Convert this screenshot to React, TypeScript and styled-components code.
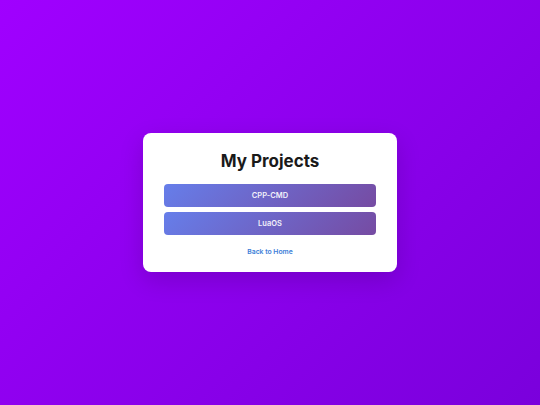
import React from 'react';
import styled, {createGlobalStyle} from 'styled-components';

const GlobalStyle = createGlobalStyle`
  html, body {
    margin: 0;
    padding: 0;
    height: 100%;
  }
  body {
    font-family: Inter, "Noto Sans", sans-serif;
  }
  #root {
    height: 100%;
  }
`;

const Page = styled.div`
  min-height: 100vh;
  display: flex;
  align-items: center;
  justify-content: center;
  background: linear-gradient(135deg, #a000ff 0%, #7a00dc 100%);
`;

const Card = styled.div`
  width: 254px;
  box-sizing: border-box;
  padding: 17px 21px 16px;
  background: #ffffff;
  border-radius: 8px;
  box-shadow: 0 8px 24px rgba(0, 0, 0, 0.15);
  display: flex;
  flex-direction: column;
  align-items: stretch;
`;

const Title = styled.h1`
  margin: 0 0 12px;
  font-size: 17px;
  line-height: 22px;
  font-weight: 700;
  color: #1a1a1a;
  text-align: center;
`;

const ProjectList = styled.div`
  display: flex;
  flex-direction: column;
  gap: 5px;
`;

const ProjectButton = styled.a`
  height: 23px;
  display: flex;
  align-items: center;
  justify-content: center;
  border-radius: 4px;
  background: linear-gradient(135deg, #667eea 0%, #764ba2 100%);
  color: #f2f0fa;
  font-size: 7.5px;
  font-weight: 600;
  text-decoration: none;
`;

const BackLink = styled.a`
  margin-top: 12px;
  align-self: center;
  color: #3b7dd8;
  font-size: 6.8px;
  font-weight: 600;
  text-decoration: none;
`;

const projects = ['CPP-CMD', 'LuaOS'];

const App: React.FC = () => {
    return (
        <>
            <GlobalStyle/>
            <Page>
                <Card>
                    <Title>My Projects</Title>
                    <ProjectList>
                        {projects.map(name => (
                            <ProjectButton key={name} href="#">{name}</ProjectButton>
                        ))}
                    </ProjectList>
                    <BackLink href="#">Back to Home</BackLink>
                </Card>
            </Page>
        </>
    );
};

export default App;
